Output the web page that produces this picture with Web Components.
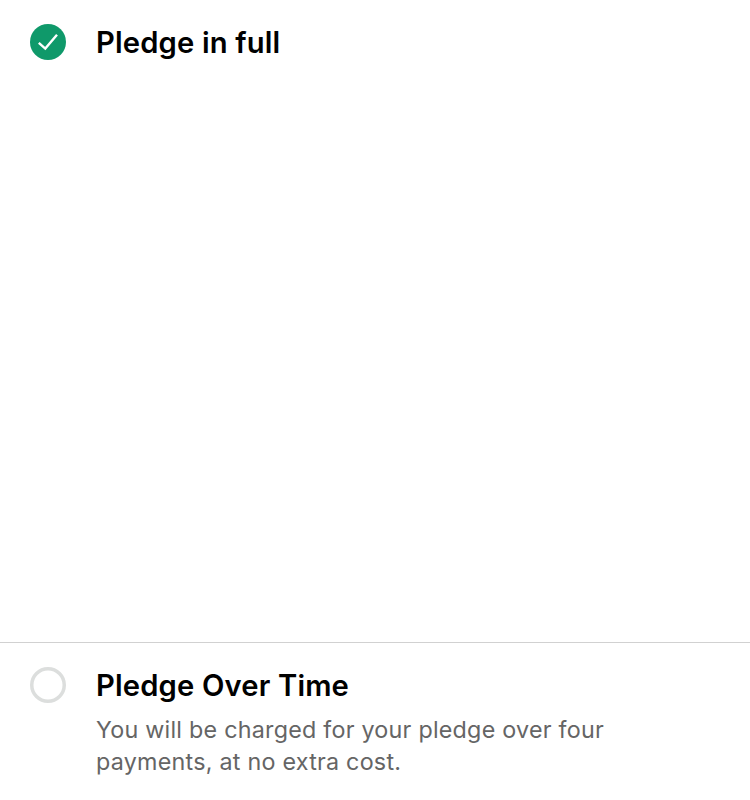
<!DOCTYPE html>
<html lang="en"><head><meta charset="utf-8"><title>Pledge</title>
<style>html,body{margin:0;background:#fff}body{font-family:Inter,sans-serif}</style></head>
<body><plan-list><pledge-option class="first" checked><span slot="title">Pledge in full</span></pledge-option><pledge-option><span slot="title">Pledge Over Time</span><span slot="text">You will be charged for your pledge over four<br>payments, at no extra cost.</span></pledge-option></plan-list>
<script>
customElements.define('plan-list', class extends HTMLElement{
constructor(){super();this.attachShadow({mode:'open'}).innerHTML=`<style>:host{display:grid;grid-template-rows:642px 158px;height:800px;overflow:hidden}::slotted(:not(.first)){border-top:1px solid #d1d1d1}</style><slot></slot>`}});
customElements.define('radio-mark', class extends HTMLElement{
constructor(){super();this.attachShadow({mode:'open'}).innerHTML=`<style>:host{display:block;width:36px;height:36px}svg{display:block}.on{display:none}:host([checked]) .on{display:block}:host([checked]) .off{display:none}</style>
<svg class="on" width="36" height="36" viewBox="0 0 36 36"><circle cx="18" cy="18" r="18" fill="#0f996a"/><path d="M8.8 18.8L15.3 24.6L27 10.8" fill="none" stroke="#fff" stroke-width="2.4"/></svg>
<svg class="off" width="36" height="36" viewBox="0 0 36 36"><circle cx="18" cy="18" r="16.25" fill="#fff" stroke="#dcdedd" stroke-width="3.5"/></svg>`}});
customElements.define('pledge-option', class extends HTMLElement{
constructor(){super();this.attachShadow({mode:'open'}).innerHTML=`<style>:host{display:flex;gap:30px;box-sizing:border-box;padding:24px 30px}.copy{display:flex;flex-direction:column;gap:9px}.title{font-size:29.2px;font-weight:600;line-height:38px;letter-spacing:.16px;color:#000}.text{font-size:23.3px;line-height:32px;letter-spacing:.24px;color:#656565}</style><radio-mark></radio-mark><div class="copy"><div class="title"><slot name="title"></slot></div><div class="text"><slot name="text"></slot></div></div>`}
connectedCallback(){this.shadowRoot.querySelector('radio-mark').toggleAttribute('checked',this.hasAttribute('checked'))}});
</script></body></html>
